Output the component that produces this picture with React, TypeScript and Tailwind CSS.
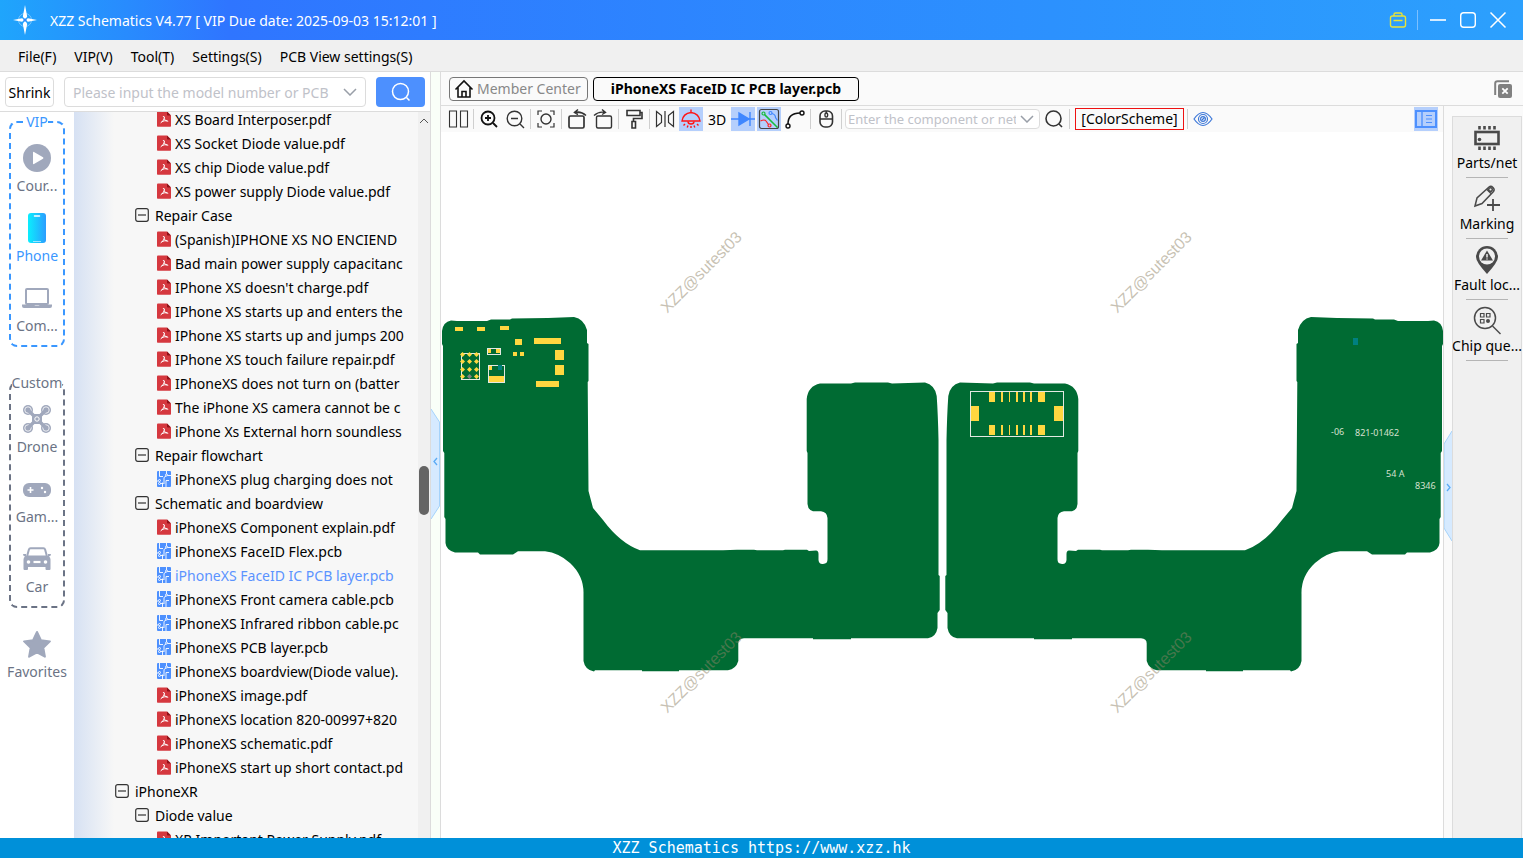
import type { ReactNode } from "react";

type FileKind = "pdf" | "pcb" | "folder";
type TreeRow = { label: string; kind: FileKind; level: number; active?: boolean };

const tree: TreeRow[] = [
    { label: "XS Board Interposer.pdf", kind: "pdf", level: 2 },
    { label: "XS Socket Diode value.pdf", kind: "pdf", level: 2 },
    { label: "XS chip Diode value.pdf", kind: "pdf", level: 2 },
    { label: "XS power supply Diode value.pdf", kind: "pdf", level: 2 },
    { label: "Repair Case", kind: "folder", level: 1 },
    { label: "(Spanish)IPHONE XS NO ENCIEND", kind: "pdf", level: 2 },
    { label: "Bad main power supply capacitanc", kind: "pdf", level: 2 },
    { label: "IPhone XS doesn't charge.pdf", kind: "pdf", level: 2 },
    { label: "IPhone XS starts up and enters the", kind: "pdf", level: 2 },
    { label: "IPhone XS starts up and jumps 200", kind: "pdf", level: 2 },
    { label: "IPhone XS touch failure repair.pdf", kind: "pdf", level: 2 },
    { label: "IPhoneXS does not turn on (batter", kind: "pdf", level: 2 },
    { label: "The iPhone XS camera cannot be c", kind: "pdf", level: 2 },
    { label: "iPhone Xs External horn soundless", kind: "pdf", level: 2 },
    { label: "Repair flowchart", kind: "folder", level: 1 },
    { label: "iPhoneXS plug charging does not", kind: "pcb", level: 2 },
    { label: "Schematic and boardview", kind: "folder", level: 1 },
    { label: "iPhoneXS Component explain.pdf", kind: "pdf", level: 2 },
    { label: "iPhoneXS FaceID Flex.pcb", kind: "pcb", level: 2 },
    { label: "iPhoneXS FaceID IC PCB layer.pcb", kind: "pcb", level: 2, active: true },
    { label: "iPhoneXS Front camera cable.pcb", kind: "pcb", level: 2 },
    { label: "iPhoneXS Infrared ribbon cable.pc", kind: "pcb", level: 2 },
    { label: "iPhoneXS PCB layer.pcb", kind: "pcb", level: 2 },
    { label: "iPhoneXS boardview(Diode value).", kind: "pcb", level: 2 },
    { label: "iPhoneXS image.pdf", kind: "pdf", level: 2 },
    { label: "iPhoneXS location 820-00997+820", kind: "pdf", level: 2 },
    { label: "iPhoneXS schematic.pdf", kind: "pdf", level: 2 },
    { label: "iPhoneXS start up short contact.pd", kind: "pdf", level: 2 },
    { label: "iPhoneXR", kind: "folder", level: 0 },
    { label: "Diode value", kind: "folder", level: 1 },
    { label: "XR Important Power Supply.pdf", kind: "pdf", level: 2 },
];

const indents = ["pl-0", "pl-5", "pl-[42px]"];

function PdfIcon() {
    return (
        <svg width="14" height="16" viewBox="0 0 14 16" className="shrink-0">
            <path d="M1 .5h9l4 4V15a.7.7 0 0 1-.7.7H.7A.7.7 0 0 1 0 15V1.2Q0 .5 1 .5z" fill="#d5383f" />
            <path d="M10 .5v3.3q0 .7.7.7H14z" fill="#8f1219" />
            <path d="M6.3 5.5q1.5-.3 1.200 1.500-.9 3-3.500 4.700M7.200 8q1.100 2.200 3.600 2.300M5 10.600q2-1.200 4.800-.9" fill="none" stroke="#fff" strokeWidth="1" strokeLinecap="round" />
        </svg>
    );
}

function PcbIcon() {
    return (
        <svg width="14" height="16" viewBox="0 0 14 16" className="shrink-0">
            <rect width="14" height="16" rx="1" fill="#4d90fe" />
            <g fill="none" stroke="#fff" strokeWidth="0.900">
                <path d="M2.500 0v5.500h3.500M9.500 0v3M10.500 4.500H14M5.500 16v-4.500M9 16V9.500h3M7 13V6.500l2-1.500" />
                <path d="M0 10h1.500M3.500 12.500h3" />
                <circle cx="9.500" cy="4" r="1" />
                <circle cx="2.500" cy="12.500" r="1" />
                <circle cx="2.500" cy="9.500" r="1" />
            </g>
        </svg>
    );
}

function FolderIcon() {
    return (
        <svg width="14" height="14" viewBox="0 0 14 14" className="shrink-0">
            <rect x=".7" y=".7" width="12.600" height="12.600" rx="2" fill="none" stroke="#333" strokeWidth="1.200" />
            <path d="M3 7h8" stroke="#333" strokeWidth="1.200" />
        </svg>
    );
}

function Chevron({ className }: { className?: string }) {
    return (
        <svg width="14" height="8" viewBox="0 0 14 8" className={className}>
            <path d="M1 1l6 6 6-6" fill="none" stroke="#999fa8" strokeWidth="1.500" />
        </svg>
    );
}

function TitleBar() {
    return (
        <header className="flex h-10 shrink-0 items-center bg-gradient-to-r from-[#1fa5fc] via-[#2f75ff] via-15% to-[#2ca0fd] pr-4 pl-3 text-white">
            <svg width="26" height="30" viewBox="0 0 26 30">
                <circle cx="13" cy="15" r="6.500" fill="none" stroke="#7cc8ff" strokeWidth="1" />
                <path d="M13 0l2.200 11.500L13 15l-2.200-3.500zM13 30l2.200-11L13 15l-2.200 4z" fill="#fff" />
                <path d="M1 15l9-1.800L13 15l-3 1.800zM25 15l-9-1.800L13 15l3 1.800z" fill="#fff" />
                <circle cx="13" cy="15" r="1.800" fill="#2f8cff" />
            </svg>
            <h1 className="ml-3">XZZ Schematics V4.77 [ VIP Due date: 2025-09-03 15:12:01 ]</h1>
            <div className="ml-auto flex items-center">
                <button aria-label="Toolbox">
                    <svg width="18" height="18" viewBox="0 0 18 18" fill="none" stroke="#e9e337" strokeWidth="1.400">
                        <rect x="1.500" y="5" width="15" height="11" rx="2" />
                        <path d="M5 5V3.500q0-1.500 1.500-1.500h5q1.500 0 1.500 1.500V5M4.500 9.500h9" />
                    </svg>
                </button>
                <span className="mr-[11px] ml-[10px] h-5 w-px bg-[#7cc0ff]" />
                <div className="flex gap-[12px]">
                    <button aria-label="Minimize">
                        <svg width="18" height="18" viewBox="0 0 18 18"><path d="M1 9h16" stroke="#fff" strokeWidth="1.600" /></svg>
                    </button>
                    <button aria-label="Maximize">
                        <svg width="18" height="18" viewBox="0 0 18 18"><rect x="1.700" y="1.700" width="14.600" height="14.600" rx="3" fill="none" stroke="#fff" strokeWidth="1.400" /></svg>
                    </button>
                    <button aria-label="Close">
                        <svg width="18" height="18" viewBox="0 0 18 18"><path d="M1.500 1.500l15 15M16.500 1.500l-15 15" stroke="#fff" strokeWidth="1.500" /></svg>
                    </button>
                </div>
            </div>
        </header>
    );
}

function MenuBar() {
    const menus = ["File(F)", "VIP(V)", "Tool(T)", "Settings(S)", "PCB View settings(S)"];
    return (
        <nav className="flex h-8 shrink-0 items-center gap-[18px] border-b border-[#dcdcdc] bg-[#f0f0f0] px-[18px] pt-0.5">
            {menus.map((m) => (
                <button key={m}>{m}</button>
            ))}
        </nav>
    );
}

function RailItem({ label, active, children }: { label: string; active?: boolean; children: ReactNode }) {
    return (
        <button className="flex w-full flex-col items-center">
            <span className="flex h-8 items-center justify-center">{children}</span>
            <span className={active ? "leading-6 text-[#3a97ff]" : "leading-6 text-[#6b7385]"}>{label}</span>
        </button>
    );
}

function CategoryRail() {
    return (
        <aside className="flex w-[74px] shrink-0 flex-col items-center bg-white">
            <fieldset className="w-14 rounded-lg border-2 border-dashed border-[#3a97ff] pb-[7px]">
                <legend className="mx-auto leading-5 text-[#3a97ff]">VIP</legend>
                <div className="flex flex-col gap-[14px] pt-[10px]">
                    <RailItem label="Cour...">
                        <svg width="28" height="28" viewBox="0 0 28 28">
                            <circle cx="14" cy="14" r="14" fill="#a0a8bc" />
                            <path d="M10 8.500q0-1 1-.5l9 5.200q.9.800 0 1.600l-9 5.200q-1 .5-1-.5z" fill="#fff" />
                        </svg>
                    </RailItem>
                    <RailItem label="Phone" active>
                        <svg width="18" height="30" viewBox="0 0 18 30">
                            <defs>
                                <linearGradient id="phone" x1="0" x2="1">
                                    <stop offset="0" stopColor="#0beefd" />
                                    <stop offset="1" stopColor="#2b9dff" />
                                </linearGradient>
                            </defs>
                            <rect width="18" height="30" rx="3" fill="url(#phone)" />
                            <path d="M6.500 3h5" stroke="#fff" strokeWidth="1.500" strokeLinecap="round" />
                            <path d="M5 28.500h8" stroke="#bdeeff" strokeWidth="0.800" />
                        </svg>
                    </RailItem>
                    <RailItem label="Com...">
                        <svg width="30" height="20" viewBox="0 0 30 20">
                            <rect x="4" y="1" width="22" height="15" rx="1" fill="none" stroke="#a0a8bc" strokeWidth="2" />
                            <path d="M0 16.500h12q.5 1 1.500 1h3q1 0 1.500-1h12v1.500q0 2-2 2H2q-2 0-2-2z" fill="#a0a8bc" />
                        </svg>
                    </RailItem>
                </div>
            </fieldset>
            <fieldset className="mt-[26px] w-14 rounded-lg border-2 border-dashed border-[#6b7385] pb-[7px]">
                <legend className="mx-auto leading-5 text-[#6b7385]">Custom</legend>
                <div className="flex flex-col gap-[14px] pt-[10px]">
                    <RailItem label="Drone">
                        <svg width="28" height="28" viewBox="0 0 28 28">
                            <g fill="#a0a8bc">
                                <circle cx="5" cy="5" r="5" /><circle cx="23" cy="5" r="5" />
                                <circle cx="5" cy="23" r="5" /><circle cx="23" cy="23" r="5" />
                            </g>
                            <g fill="none" stroke="#fff" strokeWidth="0.800">
                                <circle cx="5" cy="5" r="3.200" /><circle cx="23" cy="5" r="3.200" />
                                <circle cx="5" cy="23" r="3.200" /><circle cx="23" cy="23" r="3.200" />
                            </g>
                            <path d="M5 5l6 6M23 5l-6 6M5 23l6-6M23 23l-6-6" stroke="#a0a8bc" strokeWidth="3.400" strokeLinecap="round" />
                            <rect x="9" y="9" width="10" height="10" rx="3" fill="#a0a8bc" />
                            <circle cx="14" cy="14" r="2.200" fill="none" stroke="#fff" />
                        </svg>
                    </RailItem>
                    <RailItem label="Gam...">
                        <svg width="28" height="16" viewBox="0 0 28 16">
                            <rect y="2" width="28" height="14" rx="6" fill="#a0a8bc" />
                            <path d="M4.500 9h6M7.500 6v6" stroke="#fff" strokeWidth="1.600" />
                            <circle cx="19" cy="7" r="1.200" fill="#fff" />
                            <circle cx="22" cy="11" r="1.200" fill="#fff" />
                        </svg>
                    </RailItem>
                    <RailItem label="Car">
                        <svg width="28" height="24" viewBox="0 0 28 24">
                            <path d="M7.500 1.200h13q1.200 0 1.600 1.300L24 9.500H4L5.900 2.500q.4-1.300 1.600-1.300z" fill="none" stroke="#a0a8bc" strokeWidth="2" />
                            <path d="M0 7h3v2h22V7h3q0 2-2 2.500 1.500 1 1.500 3V22q0 1-1 1h-3q-1 0-1-1v-2H5v2q0 1-1 1H1.500q-1 0-1-1v-9.500q0-2 1.500-3Q0 9 0 7z" fill="#a0a8bc" />
                            <circle cx="5.500" cy="15" r="1.800" fill="#fff" />
                            <circle cx="22.500" cy="15" r="1.800" fill="#fff" />
                            <path d="M10.500 15h7" stroke="#fff" strokeWidth="2.200" />
                        </svg>
                    </RailItem>
                </div>
            </fieldset>
            <div className="mt-5 w-full">
                <RailItem label="Favorites">
                    <svg width="28" height="28" viewBox="0 0 28 28">
                        <path d="M14 2l3.900 8.200 9 1.200-6.600 6.300 1.600 9L14 22.300l-7.900 4.400 1.600-9L1.100 11.400l9-1.200z" fill="#a0a8bc" stroke="#a0a8bc" strokeWidth="2" strokeLinejoin="round" />
                    </svg>
                </RailItem>
            </div>
        </aside>
    );
}

function FileTree() {
    return (
        <div className="flex min-w-0 flex-1 bg-[#f7f7f7]">
            <div className="w-10 shrink-0 bg-gradient-to-r from-[#d6e1f3] to-[#f7f7f7]" />
            <ul className="-mt-[5px] mr-3 ml-px min-w-0 flex-1 overflow-hidden">
                {tree.map((row) => (
                    <li key={row.label} className={indents[row.level]}>
                        <button className="flex h-6 w-full items-center overflow-hidden whitespace-nowrap">
                            {row.kind === "pdf" && <PdfIcon />}
                            {row.kind === "pcb" && <PcbIcon />}
                            {row.kind === "folder" && <FolderIcon />}
                            <span className={`${row.kind === "folder" ? "ml-1.5" : "ml-1"} ${row.active ? "text-[#5b93ff]" : ""}`}>{row.label}</span>
                        </button>
                    </li>
                ))}
            </ul>
            <div className="relative w-3 shrink-0 bg-[#f0f0f0]">
                <svg width="10" height="6" viewBox="0 0 10 6" className="mx-auto mt-1.5">
                    <path d="M1 5l4-4 4 4" fill="none" stroke="#555" />
                </svg>
                <span className="absolute top-[48.8%] left-px h-[49px] w-[10px] rounded-full bg-[#646464]" />
            </div>
        </div>
    );
}

function SidePanel() {
    return (
        <section className="flex w-[431px] shrink-0 flex-col border-r border-[#dcdcdc] bg-white">
            <div className="flex h-10 shrink-0 items-center border-b border-[#dcdcdc] pt-px pr-[5px] pl-[5px]">
                <button className="h-[30px] w-[49px] rounded-sm border border-[#dcdcdc] text-center">Shrink</button>
                <div className="ml-[10px] flex h-[30px] min-w-0 flex-1 items-center rounded-sm border border-[#dcdcdc] pr-2 pl-2">
                    <input
                        aria-label="Model search"
                        placeholder="Please input the model number or PCB"
                        className="min-w-0 flex-1 outline-none placeholder:text-[#bfc2c9]"
                    />
                    <Chevron className="ml-1" />
                </div>
                <button aria-label="Search" className="ml-[10px] flex h-[30px] w-[49px] items-center justify-center rounded-sm bg-[#4d90fe]">
                    <svg width="20" height="20" viewBox="0 0 20 20" fill="none" stroke="#fff" strokeWidth="1.500">
                        <circle cx="9.500" cy="9.500" r="8" /><path d="M15.500 15.500l3 3" />
                    </svg>
                </button>
            </div>
            <div className="flex min-h-0 flex-1 overflow-hidden">
                <CategoryRail />
                <FileTree />
            </div>
        </section>
    );
}

function Tool({ label, on, children }: { label: string; on?: boolean; children: ReactNode }) {
    return (
        <button aria-label={label} className={on ? "flex size-6 shrink-0 items-center justify-center bg-[#b5cffc]" : "flex size-6 shrink-0 items-center justify-center"}>
            <svg width="24" height="24" viewBox="0 0 24 24" fill="none" stroke="#333" strokeWidth="1.400">{children}</svg>
        </button>
    );
}

function Divider() {
    return <span className="mx-px h-5 w-px shrink-0 bg-[#cfcfcf]" />;
}

function Toolbar() {
    return (
        <div className="flex h-[26px] shrink-0 items-center gap-0.5 bg-[#fafafa] pr-[5px] pl-[5px]">
            <Tool label="Split view"><path d="M3.500 4h7v16h-7zM14.500 4h7v16h-7z" strokeWidth="1.100" /></Tool>
            <Divider />
            <Tool label="Zoom in"><g stroke="#111" strokeWidth="1.800"><circle cx="11" cy="11" r="6.500" /><path d="M16 16l4 4M8 11h6M11 8v6" /></g></Tool>
            <Tool label="Zoom out"><circle cx="11.500" cy="11.500" r="7.300" /><path d="M17 17l4 4M8 11.500h7" /></Tool>
            <Divider />
            <Tool label="Fit"><circle cx="12" cy="12" r="5" /><path d="M4 8V4h4M16 4h4v4M20 16v4h-4M8 20H4v-4" strokeWidth="1.200" /></Tool>
            <Divider />
            <Tool label="Rotate left"><rect x="4" y="9" width="15" height="12" rx="1.500" strokeWidth="1.700" /><path d="M13 2.500L9.500 5.500l3.500 2M10 5.500q6-1.500 11 3" strokeWidth="1.500" /></Tool>
            <Tool label="Rotate right"><rect x="5.500" y="9" width="15" height="12" rx="1.500" /><path d="M11 2.500l3.500 3-3.500 2M14 5.500q-6-1.500-11 3" /></Tool>
            <Divider />
            <Tool label="Paint"><path d="M5 3.500h13v5H5zM18 5.500h2v6h-8.500v3M10 14.500h3.500V21H10z" strokeWidth="1.600" /></Tool>
            <Divider />
            <Tool label="Mirror"><path d="M3.500 4.500l5 4v7l-5 4zM20.500 4.500l-5 4v7l5 4zM12 4v16" strokeWidth="1.200" /></Tool>
            <Tool label="Light" on>
                <g stroke="#ff1414"><path d="M3 14h18q-1-7.500-9-8.500-8 1-9 8.500zM12 2.500V5.500" /><path d="M9 14.500q0 2.500 3 2.500t3-2.500M6 17l-1.500 1.500M18 17l1.500 1.500M9 18.500l-.8 2M15 18.500l.8 2M12 19v2" /></g>
            </Tool>
            <button className="size-6 shrink-0 text-center whitespace-nowrap">3D</button>
            <Tool label="Diode" on><g stroke="#3f87ff"><path d="M0 12h24M19 5v14" /><path d="M8 6v12l10-6z" fill="#3f87ff" /></g></Tool>
            <Tool label="Net lines" on>
                <rect x="2.500" y="2.500" width="19" height="19" rx="2" stroke="#444" strokeWidth="1.200" />
                <g stroke="#17bd3c" strokeWidth="1.200"><circle cx="6.500" cy="6.500" r="1.500" /><path d="M7.600 7.600L20.500 20.500" strokeWidth="1.500" /></g>
                <g stroke="#3f87ff" strokeWidth="1.200"><circle cx="13.500" cy="6" r="1.500" /><path d="M15 6.500q3.500 1 3.500 4l2 3" /></g>
                <g stroke="#f22" strokeWidth="1.200"><circle cx="12.500" cy="18.500" r="1.500" /><path d="M3.500 14q4-2 5.500 0l2.500 3.500" /></g>
            </Tool>
            <Tool label="Curve"><g stroke="#111"><circle cx="5" cy="19" r="2" /><circle cx="19" cy="6" r="2" /><path d="M5 17q0-11 12-11" strokeWidth="1.600" /></g></Tool>
            <Divider />
            <Tool label="Mouse"><rect x="6" y="4" width="12.500" height="16" rx="5" strokeWidth="1.600" /><path d="M6 12h12.500M12.300 4v2" /><rect x="11" y="6" width="2.600" height="4" rx="1.300" /></Tool>
            <Divider />
            <div className="flex h-5 w-[195px] shrink-0 items-center rounded-sm border border-[#dcdcdc] bg-white pr-[5px] pl-0.5">
                <input
                    aria-label="Component or net"
                    placeholder="Enter the component or net name"
                    className="min-w-0 flex-1 text-[13px] leading-4 outline-none placeholder:text-[#bfc2c9]"
                />
                <Chevron className="ml-1" />
            </div>
            <Tool label="Find"><circle cx="11.500" cy="11.500" r="7.500" strokeWidth="1.600" /><path d="M17 17l3 3" strokeWidth="1.600" /></Tool>
            <Divider />
            <button className="ml-0.5 h-[22px] w-[109px] shrink-0 border border-[#e11] text-center leading-5 whitespace-nowrap">[ColorScheme]</button>
            <Divider />
            <Tool label="Show">
                <g stroke="#3d78d8" strokeWidth="1.200"><path d="M3 12q9-13 18 0-9 13-18 0z" /><circle cx="12" cy="12" r="4.500" /><circle cx="12" cy="12" r="2.400" /><path d="M11 13l2.500-2.500" /></g>
            </Tool>
            <div className="ml-auto">
                <Tool label="Side list" on>
                    <g stroke="#4d90fe"><rect x="2" y="4" width="20" height="16" strokeWidth="2" /><path d="M8 4v16" /><path d="M12 8.500h6M12 12h6M12 15.500h6" strokeWidth="1.200" /></g>
                </Tool>
            </div>
        </div>
    );
}

const outline =
    "M442 344V331Q443 322 451 320.500L457 321H487L491 319.500H510L512 318.500L548 318L574 317Q584 319 587 330V343L588.500 344V381L587.700 382L588.500 491L593 508L603 520Q620 543 640 550.300H723L737 549.700H754L757 550.300H783L785 549.700H807L809 551L816 550.500Q818.500 550.500 818.500 554V560Q819 564.500 823 564L825 563.500Q827.500 563 827.500 559V518Q827 512 821 511.300H813Q808 510 807.500 504V453L806.700 451V399Q808 386 820 383.500H851L855 382.500H888L892 383.500L925 382.500Q935 385 936.700 396Q938 415 938.500 440V575L939.700 576V610L937.500 613V628Q936 637 928 638.300H851V639.300H813V638.300H744Q738 638.500 738.300 644V661Q736 669 728 670.300H679V671.300H642V670.300H595L594 671.500Q585 670 583.500 661V594Q584 576 570 563Q559 553 545 551.300H518L513 554.500H480L478 552.500H455Q446 550 445.500 543V519L444.300 517V453L443 451V346Z";

// x, y, width, height
const pads = [
    [455, 327, 8, 4], [477, 327, 8, 4], [500, 326, 9, 4], [515, 339, 7, 6], [534, 338, 27, 6],
    [555, 350, 9, 10], [555, 365, 9, 10], [536, 381, 23, 6], [513, 352, 4, 4], [520, 352, 4, 4],
    [487, 348, 4, 5], [496, 348, 4, 5], [488, 365, 4, 5], [489, 376, 15, 6],
    [971, 406, 8, 15], [1054, 406, 9, 15],
];
// x, width of the connector pins, drawn in both rows
const pins = [[989, 6], [1001, 2], [1009, 1], [1016, 2], [1023, 2], [1030, 2], [1038, 7]];
const bgaX = [462, 469, 476];
const bgaY = [354, 361, 369, 376];
const marks = [[701, 272], [1151, 272], [701, 672], [1151, 672]];

function Board() {
    return (
        <svg viewBox="441 132 1002 706" className="min-h-0 w-full flex-1 bg-white">
            <path d={outline} fill="#006b33" />
            <path d={outline} fill="#006b33" transform="translate(1885 0) scale(-1 1)" />
            <g fill="#ffd740" shapeRendering="crispEdges">
                {pads.map(([x, y, w, h]) => (
                    <rect key={`${x}-${y}`} x={x} y={y} width={w} height={h} />
                ))}
                {pins.map(([x, w]) => (
                    <path key={x} d={`M${x} 392h${w}v10h${-w}zM${x} 425h${w}v10h${-w}z`} />
                ))}
            </g>
            <g fill="none" stroke="#e4e9e2">
                <rect x="487.500" y="348.500" width="13" height="6" />
                <rect x="461.500" y="353.500" width="18" height="26" />
                <rect x="488.500" y="365.500" width="16" height="17" />
                <rect x="970.500" y="391.500" width="93" height="45" />
            </g>
            {bgaY.map((y) =>
                bgaX.map((x) => (
                    <path key={`${x}-${y}`} d={`M${x + 0.5} ${y - 2}l2.500 2.500-2.500 2.500-2.500-2.500z`} fill={x === 469 && y === 376 ? "#808080" : "#ffd740"} />
                ))
            )}
            <rect x="498" y="365" width="4" height="5" fill="#008080" />
            <rect x="1353" y="338" width="5" height="7" fill="#008080" />
            <g fill="#d5e0cf" fontSize="9">
                <text x="1331" y="435">-06</text>
                <text x="1355" y="436">821-01462</text>
                <text x="1386" y="477">54 A</text>
                <text x="1415" y="489">8346</text>
            </g>
            <g className="font-['Liberation_Sans',sans-serif]" fontSize="16" fill="#8f8468" fillOpacity="0.500" textAnchor="middle">
                {marks.map(([x, y]) => (
                    <text key={`${x}-${y}`} transform={`translate(${x + 4} ${y + 4}) rotate(-45)`}>XZZ@sutest03</text>
                ))}
            </g>
        </svg>
    );
}

function PanelItem({ label, children }: { label: string; children: ReactNode }) {
    return (
        <li>
            <button className="flex w-full flex-col items-center pt-1 pb-1">
                <span className="flex h-8 items-center">
                    <svg width="28" height="30" viewBox="0 0 28 30" fill="none" stroke="#4a4a4a" strokeWidth="1.500">{children}</svg>
                </span>
                <span className="leading-5 whitespace-nowrap">{label}</span>
            </button>
            <hr className="mx-auto w-[42px] border-[#b5b5b5]" />
        </li>
    );
}

function RightPanel() {
    return (
        <aside className="flex w-[79px] shrink-0 bg-[#fafafa]">
            <button aria-label="Collapse right panel" className="flex w-2 shrink-0 items-center pt-7">
                <svg width="8" height="110" viewBox="0 0 8 110">
                    <path d="M8 0L0 13V97L8 110" fill="#d6eaff" stroke="#a5d3fb" />
                    <path d="M3 53l3 3.500L3 60" fill="none" stroke="#5aaaf5" strokeWidth="1.300" />
                </svg>
            </button>
            <ul className="mt-[10px] mr-px min-w-0 flex-1 border border-b-0 border-[#dcdcdc] bg-[#f0f0f0]">
                <PanelItem label="Parts/net">
                    <rect x="2.500" y="10" width="23" height="12" strokeWidth="2.600" />
                    <circle cx="6.500" cy="17.500" r="1.800" fill="#4a4a4a" stroke="none" />
                    <path d="M6.500 4v3.500M11.500 4v3.500M16.500 4v3.500M21.500 4v3.500M6.500 24.500V28M11.500 24.500V28M16.500 24.500V28M21.500 24.500V28" strokeWidth="2.600" />
                </PanelItem>
                <PanelItem label="Marking">
                    <path d="M2 23l2-8L16 4q2-1.500 4 .5t.5 4L9 20.500zM14 6.500l4.500 4.500" />
                    <circle cx="17.500" cy="6.500" r="1.800" />
                    <path d="M20 16v12M14 22h13" strokeWidth="1.800" />
                </PanelItem>
                <PanelItem label="Fault loc...">
                    <path d="M14 2a11 11 0 0 1 11 11q0 5-11 17Q3 18 3 13A11 11 0 0 1 14 2z" fill="#4a4a4a" stroke="none" />
                    <circle cx="14" cy="12.500" r="8" fill="#f0f0f0" stroke="none" />
                    <path d="M14 6.500l6 10H8z" fill="#4a4a4a" stroke="none" />
                    <path d="M14 10v3.500M14 14.500v1" stroke="#f0f0f0" />
                </PanelItem>
                <PanelItem label="Chip que...">
                    <circle cx="12" cy="13" r="10.500" />
                    <path d="M19.500 21l8 8" />
                    <path d="M7.500 8.500h3.500v3.500H7.500zM13.500 8.500H17v3.500h-3.500zM7.500 14.500h3.500v3.500H7.500z" strokeWidth="1.200" />
                    <circle cx="15" cy="16" r="2" fill="#4a4a4a" stroke="none" />
                </PanelItem>
            </ul>
        </aside>
    );
}

function Tabs() {
    return (
        <div className="flex h-[34px] shrink-0 items-center gap-[5px] border-b border-[#dcdcdc] bg-[#fafafa] pr-[10px] pl-2">
            <button className="flex h-6 w-[139px] items-center gap-[3px] rounded-sm border border-[#777] pl-1 whitespace-nowrap text-[#888]">
                <svg width="20" height="20" viewBox="0 0 20 20" fill="none" stroke="#111" strokeWidth="1.600">
                    <path d="M1.500 10.500L10 2l8.500 8.500M4 8.500V18h12V8.500" />
                    <path d="M8 18v-5.500h4V18" />
                </svg>
                Member Center
            </button>
            <button className="h-6 w-[266px] rounded-sm border border-black text-center leading-5 font-bold whitespace-nowrap">iPhoneXS FaceID IC PCB layer.pcb</button>
            <button aria-label="Close all tabs" className="ml-auto">
                <svg width="20" height="20" viewBox="0 0 20 20">
                    <path d="M2.200 16V4.500q0-2.300 2.300-2.300H16" fill="none" stroke="#808080" strokeWidth="2" />
                    <rect x="5" y="5" width="14" height="14" rx="2" fill="#808080" />
                    <path d="M9.300 9.300l5.400 5.400M14.700 9.300l-5.400 5.400" stroke="#fff" strokeWidth="1.800" />
                </svg>
            </button>
        </div>
    );
}

export default function App() {
    return (
        <div className="flex h-screen flex-col overflow-hidden font-['Noto_Sans','Open_Sans',sans-serif] text-[14px] text-black">
            <TitleBar />
            <MenuBar />
            <div className="flex min-h-0 flex-1">
                <SidePanel />
                <button aria-label="Collapse file list" className="flex w-[10px] shrink-0 items-center border-r border-[#dcdcdc] bg-[#f9fff8] pt-[18px]">
                    <svg width="9" height="110" viewBox="0 0 9 110">
                        <path d="M0 0L8.500 13V97L0 110" fill="#d6eaff" stroke="#a5d3fb" />
                        <path d="M6 49l-3 3.500L6 56" fill="none" stroke="#5aaaf5" strokeWidth="1.300" />
                    </svg>
                </button>
                <main className="flex min-w-0 flex-1 flex-col">
                    <Tabs />
                    <div className="flex min-h-0 flex-1">
                        <section className="flex min-w-0 flex-1 flex-col border-r border-[#dcdcdc]">
                            <Toolbar />
                            <Board />
                        </section>
                        <RightPanel />
                    </div>
                </main>
            </div>
            <footer className="h-5 shrink-0 bg-[#0090d9] text-center font-['DejaVu_Sans_Mono',monospace] text-[15px] leading-5 text-white">
                XZZ Schematics https://www.xzz.hk
            </footer>
        </div>
    );
}
